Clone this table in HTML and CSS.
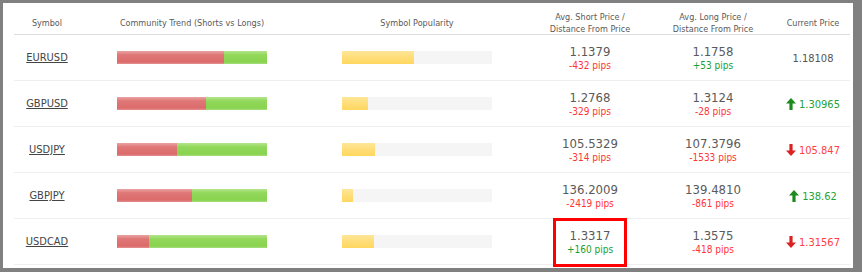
FILE: index.html
```html
<!DOCTYPE html>
<html>
<head>
<meta charset="utf-8">
<link rel="stylesheet" href="styles.css">
</head>
<body>
<div class="frame">
  <div class="table">
    <div class="row head">
      <div class="cell">Symbol</div>
      <div class="cell">Community Trend (Shorts vs Longs)</div>
      <div class="cell">Symbol Popularity</div>
      <div class="cell">Avg. Short Price /<br>Distance From Price</div>
      <div class="cell">Avg. Long Price /<br>Distance From Price</div>
      <div class="cell">Current Price</div>
    </div>

    <div class="row">
      <div class="cell"><a class="sym" href="#">EURUSD</a></div>
      <div class="cell"><div class="trend"><span class="short" style="width:71.3%"></span><span class="long"></span></div></div>
      <div class="cell"><div class="pop"><span class="fill" style="width:48%"></span></div></div>
      <div class="cell price"><span class="val">1.1379</span><span class="pips neg">-432 pips</span></div>
      <div class="cell price"><span class="val">1.1758</span><span class="pips pos">+53 pips</span></div>
      <div class="cell cur">1.18108</div>
    </div>

    <div class="row">
      <div class="cell"><a class="sym" href="#">GBPUSD</a></div>
      <div class="cell"><div class="trend"><span class="short" style="width:59.3%"></span><span class="long"></span></div></div>
      <div class="cell"><div class="pop"><span class="fill" style="width:17%"></span></div></div>
      <div class="cell price"><span class="val">1.2768</span><span class="pips neg">-329 pips</span></div>
      <div class="cell price"><span class="val">1.3124</span><span class="pips neg">-28 pips</span></div>
      <div class="cell cur up"><svg class="arrow" width="10" height="12" viewBox="0 0 10 12"><path d="M5 0 L10 5.5 L6.6 5.5 L6.6 12 L3.4 12 L3.4 5.5 L0 5.5 Z"/></svg>1.30965</div>
    </div>

    <div class="row">
      <div class="cell"><a class="sym" href="#">USDJPY</a></div>
      <div class="cell"><div class="trend"><span class="short" style="width:40%"></span><span class="long"></span></div></div>
      <div class="cell"><div class="pop"><span class="fill" style="width:22%"></span></div></div>
      <div class="cell price"><span class="val">105.5329</span><span class="pips neg">-314 pips</span></div>
      <div class="cell price"><span class="val">107.3796</span><span class="pips neg">-1533 pips</span></div>
      <div class="cell cur down"><svg class="arrow" width="10" height="12" viewBox="0 0 10 12"><path d="M5 12 L10 6.5 L6.6 6.5 L6.6 0 L3.4 0 L3.4 6.5 L0 6.5 Z"/></svg>105.847</div>
    </div>

    <div class="row">
      <div class="cell"><a class="sym" href="#">GBPJPY</a></div>
      <div class="cell"><div class="trend"><span class="short" style="width:50%"></span><span class="long"></span></div></div>
      <div class="cell"><div class="pop"><span class="fill" style="width:7.3%"></span></div></div>
      <div class="cell price"><span class="val">136.2009</span><span class="pips neg">-2419 pips</span></div>
      <div class="cell price"><span class="val">139.4810</span><span class="pips neg">-861 pips</span></div>
      <div class="cell cur up"><svg class="arrow" width="10" height="12" viewBox="0 0 10 12"><path d="M5 0 L10 5.5 L6.6 5.5 L6.6 12 L3.4 12 L3.4 5.5 L0 5.5 Z"/></svg>138.62</div>
    </div>

    <div class="row">
      <div class="cell"><a class="sym" href="#">USDCAD</a></div>
      <div class="cell"><div class="trend"><span class="short" style="width:21.5%"></span><span class="long"></span></div></div>
      <div class="cell"><div class="pop"><span class="fill" style="width:21.3%"></span></div></div>
      <div class="cell price hl-cell"><span class="val">1.3317</span><span class="pips pos">+160 pips</span><div class="highlight"></div></div>
      <div class="cell price"><span class="val">1.3575</span><span class="pips neg">-418 pips</span></div>
      <div class="cell cur down"><svg class="arrow" width="10" height="12" viewBox="0 0 10 12"><path d="M5 12 L10 6.5 L6.6 6.5 L6.6 0 L3.4 0 L3.4 6.5 L0 6.5 Z"/></svg>1.31567</div>
    </div>
  </div>
</div>
</body>
</html>
```

FILE: styles.css
```css
html, body {
  margin: 0;
  padding: 0;
}
body {
  background: #808080;
  width: 862px;
  height: 272px;
  overflow: hidden;
  font-family: "DejaVu Sans Condensed", "Liberation Sans", sans-serif;
}
.frame {
  margin: 3px 9px 0 3px;
  height: 265px;
  background: #fff;
  padding-left: 11px;
  box-sizing: border-box;
}
.table {
  width: 836px;
}
.row {
  display: grid;
  grid-template-columns: 66px 224px 226px 120px 126px 74px;
  height: 46px;
  border-bottom: 1px solid #efefef;
  box-sizing: border-box;
}
.row.head {
  height: 32px;
  padding-top: 8px;
  border-bottom: 1px solid #dedede;
  font-size: 9px;
  line-height: 12px;
  color: #5a5a5a;
}
.cell {
  display: flex;
  flex-direction: column;
  align-items: center;
  justify-content: center;
  text-align: center;
  position: relative;
}
.sym {
  font-size: 11px;
  color: #444;
  text-decoration: underline;
}
.trend {
  width: 150px;
  height: 13px;
  display: flex;
}
.trend .short {
  height: 100%;
  background: linear-gradient(to bottom, #eaa3a3 0%, #df7777 30%, #dc6b6b 85%, #e49090 100%);
}
.trend .long {
  flex: 1;
  height: 100%;
  background: linear-gradient(to bottom, #b5e58e 0%, #92d85b 30%, #88d34f 85%, #a8de7c 100%);
}
.pop {
  width: 150px;
  height: 13px;
  background: #f5f5f5;
}
.pop .fill {
  display: block;
  height: 100%;
  background: linear-gradient(to bottom, #ffe698 0%, #ffdc72 60%, #ffd760 100%);
}
.price .val {
  font-size: 13px;
  line-height: 15px;
  color: #5a5a5a;
}
.price .pips {
  font-size: 10px;
  line-height: 13px;
}
.neg { color: #ff3535; }
.pos { color: #1aa032; }
.cur {
  flex-direction: row;
  font-size: 11px;
  color: #555;
  padding-top: 1px;
}
.cur.up { color: #22a33a; }
.cur.down { color: #ff4040; }
.arrow {
  margin-right: 3px;
}
.up .arrow { fill: #1d8a1d; }
.down .arrow { fill: #d92323; }
.highlight {
  position: absolute;
  left: 23px;
  top: -1px;
  width: 74px;
  height: 49px;
  border: 3px solid #ff0000;
  box-sizing: border-box;
}
```
